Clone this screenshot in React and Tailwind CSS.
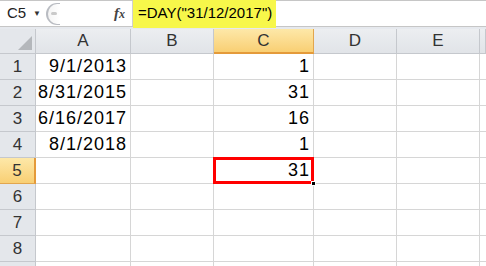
import React from "react";

const cols = ["A", "B", "C", "D", "E", ""];
const rows = [
  ["9/1/2013", "", "1"],
  ["8/31/2015", "", "31"],
  ["6/16/2017", "", "16"],
  ["8/1/2018", "", "1"],
  ["", "", "31"],
  ["", "", ""],
  ["", "", ""],
  ["", "", ""],
  ["", "", ""],
];

const gridCols = "grid grid-cols-[36px_95px_83px_100px_83px_83px_1fr]";

export default function App() {
  return (
    <div className="w-[486px] h-[266px] overflow-hidden bg-white font-['Liberation_Sans',Arial,sans-serif] text-black">
      {/* formula bar */}
      <div className="h-[27px] flex items-stretch border-t border-b border-[#c6c6c6] bg-white relative">
        <div className="w-[46px] flex items-center justify-between pl-[7px] pr-[5px] text-[15px] text-[#222]">
          <span>C5</span>
          <span className="text-[8px] text-[#333]">▼</span>
        </div>
        <div className="w-[14px] flex items-center">
          <div className="w-[14px] h-[22px] rounded-l-full border-l-2 border-t border-b border-[#b9bcc2] bg-gradient-to-r from-[#f4f4f4] to-white flex items-center justify-center">
            <div className="w-[6px] h-[3px] rounded-full bg-[#c9c9c9]" />
          </div>
        </div>
        <div className="w-[73px] flex items-center justify-end pr-[7px] border-r border-[#d0d0d0]">
          <span className="font-['Liberation_Serif',serif] italic text-[15px] text-[#444] font-bold">
            f<span className="text-[12px]">x</span>
          </span>
        </div>
        <div className="flex-1 flex items-center">
          <div className="h-[29px] -mt-[1px] bg-[#f7f74a] flex items-center pl-[5px] pr-[4px] text-[15px] text-black">
            =DAY("31/12/2017")
          </div>
        </div>
      </div>
      <div className="h-[2px] bg-[#e6e9ee]" />
      {/* sheet */}
      <div className={gridCols + " grid-rows-[25px_repeat(9,26px)]"}>
        <div className="border-r border-b border-[#c5c8cd] bg-[#e4e7eb] relative">
          <div className="absolute right-[3px] bottom-[3px] w-0 h-0 border-l-[14px] border-l-transparent border-b-[14px] border-b-[#b4b7bb]" />
        </div>
        {cols.map((c, i) =>
          c === "C" ? (
            <div
              key={i}
              className="border-r border-b-2 border-r-[#e2a64e] border-b-[#e49a3a] bg-gradient-to-b from-[#fde8a8] to-[#f9cf73] flex items-center justify-center text-[17px] text-[#333]"
            >
              {c}
            </div>
          ) : (
            <div
              key={i}
              className="border-r border-b border-[#c5c8cd] bg-gradient-to-b from-[#eceef1] to-[#e1e4e8] flex items-center justify-center text-[17px] text-[#333]"
            >
              {c}
            </div>
          )
        )}
        {rows.map((r, ri) => (
          <React.Fragment key={ri}>
            {ri === 4 ? (
              <div className="border-r-2 border-b border-r-[#e49a3a] border-b-[#e2a64e] bg-gradient-to-b from-[#fde8a8] to-[#f9cf73] flex items-center justify-center text-[17px] text-[#333]">
                {ri + 1}
              </div>
            ) : (
              <div className="border-r border-b border-[#c5c8cd] bg-[#e4e7eb] flex items-center justify-center text-[17px] text-[#333]">
                {ri < 8 ? ri + 1 : ""}
              </div>
            )}
            <div className="border-r border-b border-[#d6d6d6] flex items-center justify-end pr-[3px] text-[18px] tracking-[1px]">
              {r[0]}
            </div>
            <div className="border-r border-b border-[#d6d6d6]" />
            {ri === 4 ? (
              <div className="relative border-r border-b border-[#d6d6d6]">
                <div className="absolute -left-[1px] -top-[1px] w-[101px] h-[27px] border-[3px] border-[#ff0000] flex items-center justify-end pr-[1px] text-[18px] tracking-[1px]">
                  {r[2]}
                </div>
                <div className="absolute -right-[3px] -bottom-[3px] w-[5px] h-[5px] bg-black border border-white" />
              </div>
            ) : (
              <div className="border-r border-b border-[#d6d6d6] flex items-center justify-end pr-[3px] text-[18px] tracking-[1px]">
                {r[2]}
              </div>
            )}
            <div className="border-r border-b border-[#d6d6d6]" />
            <div className="border-r border-b border-[#d6d6d6]" />
            <div className="border-b border-[#d6d6d6]" />
          </React.Fragment>
        ))}
      </div>
    </div>
  );
}
